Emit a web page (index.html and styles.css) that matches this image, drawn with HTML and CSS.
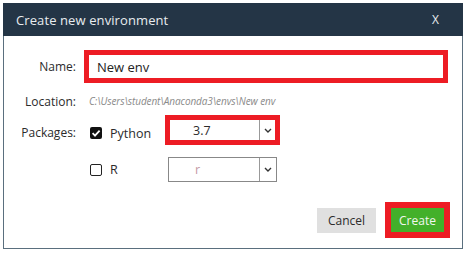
FILE: index.html
```html
<!DOCTYPE html>
<html>
<head>
<meta charset="utf-8">
<link rel="stylesheet" href="styles.css">
</head>
<body>
<div class="dialog">
  <div class="header">
    <span class="title">Create new environment</span>
    <span class="close">X</span>
  </div>
  <div class="body">
    <div class="row row-name">
      <div class="label">Name:</div>
      <div class="name-box">New env</div>
    </div>
    <div class="row row-loc">
      <div class="label">Location:</div>
      <div class="path">C:\Users\student\Anaconda3\envs\New env</div>
    </div>
    <div class="row row-py">
      <div class="label">Packages:</div>
      <div class="check-group">
        <span class="checkbox checked"><svg viewBox="0 0 12 12" width="12" height="12"><path d="M2.6 6.2 L5 8.6 L9.6 3.6" fill="none" stroke="#fff" stroke-width="1.8"/></svg></span>
        <span class="pkg">Python</span>
      </div>
      <div class="select-hl">
        <div class="select">
          <span class="val val-py">3.7</span>
          <span class="arrow"><svg viewBox="0 0 8 5" width="8" height="5"><path d="M1 1 L4 4 L7 1" fill="none" stroke="#333" stroke-width="1.4"/></svg></span>
        </div>
      </div>
    </div>
    <div class="row row-r">
      <div class="label"></div>
      <div class="check-group">
        <span class="checkbox"></span>
        <span class="pkg">R</span>
      </div>
      <div class="select select-r">
        <span class="val val-r">r</span>
        <span class="arrow"><svg viewBox="0 0 8 5" width="8" height="5"><path d="M1 1 L4 4 L7 1" fill="none" stroke="#333" stroke-width="1.4"/></svg></span>
      </div>
    </div>
    <div class="footer">
      <div class="btn cancel">Cancel</div>
      <div class="create-hl"><div class="btn create">Create</div></div>
    </div>
  </div>
</div>
</body>
</html>
```
FILE: styles.css
```css
html, body {
  margin: 0;
  padding: 0;
  background: #fff;
}
body {
  padding: 3px;
  font-family: "Open Sans", "Noto Sans", sans-serif;
  font-size: 12px;
  color: #2b2b2b;
}
.dialog {
  width: 460px;
  height: 246px;
  box-sizing: border-box;
  display: flex;
  flex-direction: column;
}
.header {
  height: 33px;
  background: #243546;
  display: flex;
  align-items: center;
  justify-content: space-between;
  padding: 0 24px 0 13px;
  color: #e8ecef;
  font-size: 13px;
  flex: none;
}
.title { letter-spacing: 0.1px; }
.close { font-size: 12px; }
.body {
  flex: 1;
  border: 1px solid #5a6f7e;
  border-top: none;
  display: flex;
  flex-direction: column;
}
.row {
  display: flex;
  align-items: center;
}
.label {
  width: 72px;
  text-align: right;
  margin-right: 8px;
  flex: none;
}
.row-name {
  margin-top: 14px;
  height: 33px;
}
.name-box {
  width: 364px;
  height: 33px;
  box-sizing: border-box;
  border: 5px solid #ed1c24;
  padding-left: 8px;
  display: flex;
  align-items: center;
  font-size: 13px;
  color: #222;
}
.row-loc {
  margin-top: 8px;
  height: 20px;
}
.path {
  margin-left: 5px;
  font-size: 10px;
  font-style: italic;
  color: #8a8a8a;
  letter-spacing: -0.1px;
}
.row-py {
  margin-top: 4px;
  height: 30px;
}
.row-py .label { position: relative; top: 2px; }
.check-group {
  width: 81px;
  display: flex;
  align-items: center;
  flex: none;
  padding-left: 6px;
  box-sizing: border-box;
}
.row-py .check-group { position: relative; top: 3px; }
.checkbox {
  width: 12px;
  height: 12px;
  box-sizing: border-box;
  border: 1.5px solid #222;
  border-radius: 2px;
  display: inline-flex;
  flex: none;
}
.checkbox.checked {
  background: #111;
  border: none;
}
.pkg {
  margin-left: 8px;
  font-size: 12.5px;
}
.select-hl {
  width: 115px;
  height: 30px;
  box-sizing: border-box;
  border: 5px solid #ed1c24;
}
.select {
  height: 100%;
  display: flex;
  align-items: stretch;
  box-sizing: border-box;
}
.val {
  flex: 1;
  display: flex;
  align-items: center;
  font-size: 12.5px;
}
.val-py {
  padding-left: 23px;
}
.arrow {
  width: 15px;
  border-left: 1px solid #999;
  display: flex;
  align-items: center;
  justify-content: center;
}
.row-r {
  margin-top: 12px;
  height: 25px;
}
.select-r {
  margin-left: 3px;
  width: 109px;
  height: 25px;
  border: 1px solid #888;
}
.select-r .arrow { width: 16px; }
.val-r {
  color: #c49aa6;
  padding-left: 26px;
}
.footer {
  margin-top: 20px;
  display: flex;
  justify-content: flex-end;
  align-items: center;
  padding-right: 12px;
}
.btn {
  display: flex;
  align-items: center;
  justify-content: center;
  font-size: 12px;
}
.cancel {
  width: 59px;
  height: 25px;
  background: #e0e0e0;
  color: #2b2b2b;
  margin-right: 9px;
}
.create-hl {
  width: 65px;
  height: 36px;
  box-sizing: border-box;
  border: 6px solid #ed1c24;
}
.create {
  width: 100%;
  height: 100%;
  background: #43b02a;
  color: #f2f7f0;
}
```
